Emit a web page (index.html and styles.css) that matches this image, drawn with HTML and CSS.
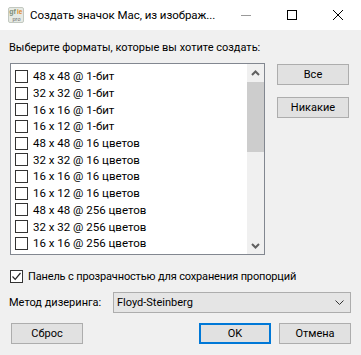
FILE: index.html
```html
<!DOCTYPE html>
<html lang="ru">
<head>
<meta charset="utf-8">
<title>Создать значок Mac</title>
<link rel="stylesheet" href="styles.css">
</head>
<body>
<div class="titlebar">
  <svg class="app-icon" width="16" height="16" viewBox="0 0 16 16">
    <rect x="0.5" y="0.5" width="15" height="15" rx="1.5" fill="#e6eae4" stroke="#c2c8c0"/>
    <text x="1.2" y="7.2" font-family="Liberation Sans, sans-serif" font-size="7" font-weight="bold" fill="#7d8f7a">gf</text>
    <text x="9" y="7" font-family="Liberation Sans, sans-serif" font-size="6.5" font-weight="bold" fill="#e08a2a">ie</text>
    <text x="4.5" y="14" font-family="Liberation Sans, sans-serif" font-size="5.5" fill="#666">pro</text>
  </svg>
  <div class="title">Создать значок Mac, из изображ...</div>
  <div class="controls">
    <div class="ctl"><svg width="10" height="10" viewBox="0 0 10 10"><path d="M0 5.5H10" stroke="#9a9a9a" stroke-width="1"/></svg></div>
    <div class="ctl"><svg width="10" height="10" viewBox="0 0 10 10"><rect x="0.5" y="0.5" width="9" height="9" fill="none" stroke="#000" stroke-width="1"/></svg></div>
    <div class="ctl"><svg width="10" height="10" viewBox="0 0 10 10"><path d="M0 0L10 10M10 0L0 10" stroke="#000" stroke-width="1"/></svg></div>
  </div>
</div>
<div class="content">
  <div class="label">Выберите форматы, которые вы хотите создать:</div>
  <div class="main">
    <div class="listbox">
      <div class="rows">
        <div class="row"><span class="cb"></span><span>48 x 48 @ 1-бит</span></div>
        <div class="row"><span class="cb"></span><span>32 x 32 @ 1-бит</span></div>
        <div class="row"><span class="cb"></span><span>16 x 16 @ 1-бит</span></div>
        <div class="row"><span class="cb"></span><span>16 x 12 @ 1-бит</span></div>
        <div class="row"><span class="cb"></span><span>48 x 48 @ 16 цветов</span></div>
        <div class="row"><span class="cb"></span><span>32 x 32 @ 16 цветов</span></div>
        <div class="row"><span class="cb"></span><span>16 x 16 @ 16 цветов</span></div>
        <div class="row"><span class="cb"></span><span>16 x 12 @ 16 цветов</span></div>
        <div class="row"><span class="cb"></span><span>48 x 48 @ 256 цветов</span></div>
        <div class="row"><span class="cb"></span><span>32 x 32 @ 256 цветов</span></div>
        <div class="row"><span class="cb"></span><span>16 x 16 @ 256 цветов</span></div>
      </div>
      <div class="scrollbar">
        <div class="sb-btn"><svg width="9" height="6" viewBox="0 0 9 6"><path d="M1 5L4.5 1.5L8 5" fill="none" stroke="#606060" stroke-width="2"/></svg></div>
        <div class="sb-track"><div class="sb-thumb"></div></div>
        <div class="sb-btn"><svg width="9" height="6" viewBox="0 0 9 6"><path d="M1 1L4.5 4.5L8 1" fill="none" stroke="#606060" stroke-width="2"/></svg></div>
      </div>
    </div>
    <div class="side">
      <div class="btn">Все</div>
      <div class="btn">Никакие</div>
    </div>
  </div>
  <div class="check-row"><span class="cb checked"><svg width="11" height="11" viewBox="0 0 11 11"><path d="M1.5 5.5L4.2 8.3L9.5 2" fill="none" stroke="#222" stroke-width="1.2"/></svg></span><span class="panel-text">Панель с прозрачностью для сохранения пропорций</span></div>
  <div class="dither-row">
    <span class="dlabel">Метод дизеринга:</span>
    <div class="select"><span>Floyd-Steinberg</span><svg width="9" height="5" viewBox="0 0 9 5"><path d="M0.5 0.5L4.5 4.5L8.5 0.5" fill="none" stroke="#333" stroke-width="1"/></svg></div>
  </div>
  <div class="bottom-row">
    <div class="btn">Сброс</div>
    <div class="spacer"></div>
    <div class="btn default">OK</div>
    <div class="btn">Отмена</div>
  </div>
</div>
</body>
</html>
```

FILE: styles.css
```css
* { box-sizing: border-box; }
html, body { margin: 0; }
body {
  width: 361px;
  height: 355px;
  overflow: hidden;
  background: #f0f0f0;
  font-family: Roboto, "Noto Sans", sans-serif;
  font-size: 11px;
  color: #000;
  white-space: nowrap;
}
.titlebar {
  height: 30px;
  background: #fff;
  display: flex;
  align-items: center;
}
.app-icon { margin-left: 8px; flex: none; }
.title { margin-left: 6px; flex: 1; font-size: 11.5px; letter-spacing: -0.05px; }
.controls { display: flex; height: 30px; }
.ctl { width: 46px; display: flex; align-items: center; justify-content: center; }

.content { padding: 10px 10px 0 10px; }
.label { height: 15px; line-height: 15px; margin-left: -1px; }
.main { display: flex; gap: 12px; margin-top: 8px; }
.listbox {
  width: 255px;
  height: 192px;
  border: 1px solid #828790;
  background: #fff;
  display: flex;
}
.rows { flex: 1; padding-top: 4px; overflow: hidden; font-size: 11.5px; }
.row {
  height: 16.7px;
  display: flex;
  align-items: center;
  padding-left: 4px;
  gap: 5px;
}
.cb {
  width: 13px;
  height: 13px;
  border: 1px solid #333;
  background: #fff;
  flex: none;
  display: inline-flex;
  align-items: center;
  justify-content: center;
}
.scrollbar {
  width: 17px;
  background: #f0f0f0;
  display: flex;
  flex-direction: column;
}
.sb-btn { height: 17px; display: flex; align-items: center; justify-content: center; }
.sb-track { flex: 1; padding-top: 1px; }
.sb-thumb { height: 70px; background: #cdcdcd; }

.side { display: flex; flex-direction: column; gap: 12px; padding-top: 1px; }
.btn {
  width: 72px;
  height: 21px;
  border: 1px solid #adadad;
  background: #e1e1e1;
  display: flex;
  align-items: center;
  justify-content: center;
}
.btn.default { border: 2px solid #0078d7; }

.check-row {
  display: flex;
  align-items: center;
  gap: 5px;
  margin-top: 15px;
  height: 13px;
}
.panel-text { letter-spacing: -0.15px; }
.dither-row {
  display: flex;
  align-items: center;
  margin-top: 9px;
  height: 21px;
}
.dlabel { width: 103px; margin-left: -1px; flex: none; }
.select {
  width: 238px;
  height: 21px;
  flex: none;
  border: 1px solid #adadad;
  background: #e5e5e5;
  display: flex;
  align-items: center;
  justify-content: space-between;
  padding: 0 6px 0 3px;
  margin-left: 1px;
}
.bottom-row { display: flex; gap: 8px; margin-top: 10px; padding-left: 1px; }
.spacer { flex: 1; }
```
